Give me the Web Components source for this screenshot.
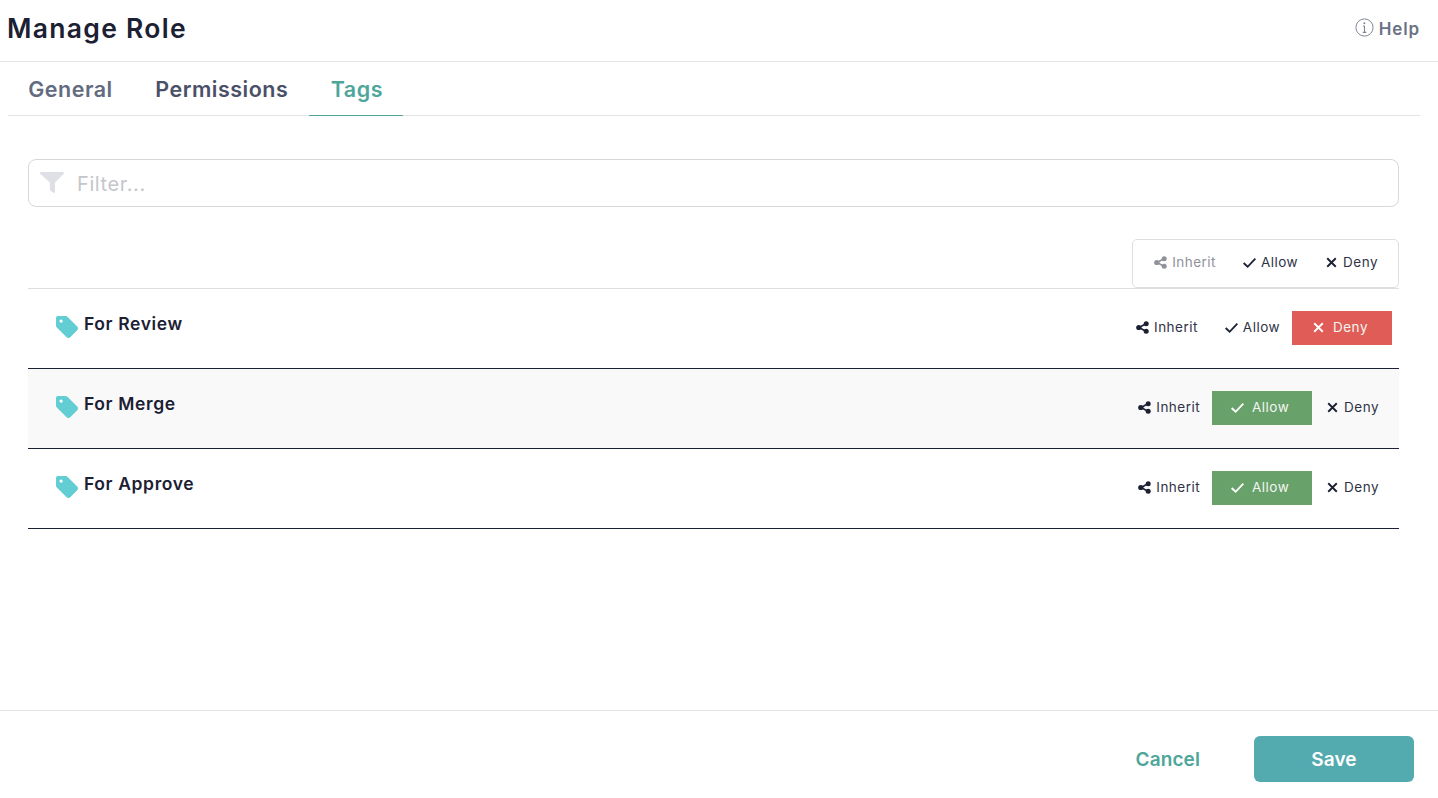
<!DOCTYPE html>
<html lang="en">
<head>
<meta charset="utf-8">
<title>Manage Role</title>
<style>
html, body { margin: 0; height: 100%; background: #fff; }
body { font-family: Inter, "Noto Sans", sans-serif; color: #1c2033; }
</style>
</head>
<body>
<role-page>
  <role-header slot="header" heading="Manage Role"></role-header>
  <role-tabs slot="tabs" items="General,Permissions,Tags" active="Tags"></role-tabs>
  <filter-box placeholder="Filter..."></filter-box>
  <perm-head></perm-head>
  <tag-row name="For Review" value="deny"></tag-row>
  <tag-row name="For Merge" value="allow" shaded></tag-row>
  <tag-row name="For Approve" value="allow"></tag-row>
  <role-footer slot="footer"></role-footer>
</role-page>

<script>
const ICONS = {
  inherit: '<svg viewBox="0 0 14 14"><path d="M10.6 3 3.4 7l7.2 4" fill="none" stroke="currentColor" stroke-width="1.7"/><circle cx="11" cy="2.900" r="2.700" fill="currentColor"/><circle cx="3" cy="7" r="2.800" fill="currentColor"/><circle cx="11" cy="11.100" r="2.700" fill="currentColor"/></svg>',
  allow: '<svg viewBox="0 0 14 14"><path d="M.7 7.500 5 11.600 13.300 2.900" fill="none" stroke="currentColor" stroke-width="2"/></svg>',
  deny: '<svg viewBox="0 0 14 14"><path d="M2.400 2.400 11.600 11.600M11.600 2.400 2.400 11.600" fill="none" stroke="currentColor" stroke-width="2"/></svg>',
};

class RolePage extends HTMLElement {
  constructor() {
    super();
    this.attachShadow({ mode: 'open' });
    this.shadowRoot.innerHTML = `
<style>
:host { display: flex; flex-direction: column; height: 798px; overflow: hidden; }
.tabs { padding: 0 18px 0 8px; }
.body { flex: 1; padding: 43px 39px 0 28px; }
</style>
<slot name="header"></slot>
<div class="tabs"><slot name="tabs"></slot></div>
<div class="body"><slot></slot></div>
<slot name="footer"></slot>`;
  }
}

class RoleHeader extends HTMLElement {
  constructor() {
    super();
    this.attachShadow({ mode: 'open' });
    this.shadowRoot.innerHTML = `
<style>
:host { display: flex; align-items: center; justify-content: space-between; box-sizing: border-box; height: 62px; padding: 0 18px 6px 7px; border-bottom: 1px solid #e3e4e8; }
h1 { margin: 0; font-size: 26.500px; font-weight: 600; color: #1c2033; letter-spacing: 1.300px; }
.help { display: flex; align-items: center; gap: 5px; font-size: 17px; font-weight: 600; color: #6b7285; padding-top: 3px; letter-spacing: .85px; }
svg { width: 19px; height: 19px; margin-top: -3px; }
</style>
<h1></h1>
<div class="help"><svg viewBox="0 0 19 19"><circle cx="9.500" cy="9.500" r="8.600" fill="none" stroke="#7d8496" stroke-width="1"/><path d="M9.500 8v6.400M7.900 8h1.600M7.700 14.400h3.600" fill="none" stroke="#7d8496" stroke-width="1.100"/><circle cx="9.400" cy="5.200" r="1" fill="#7d8496"/></svg>Help</div>`;
    this.shadowRoot.querySelector('h1').textContent = this.getAttribute('heading');
  }
}

class RoleTabs extends HTMLElement {
  constructor() {
    super();
    this.attachShadow({ mode: 'open' });
    this.shadowRoot.innerHTML = `
<style>
:host { display: block; border-bottom: 1px solid #e3e4e8; }
.list { display: flex; height: 53px; margin-left: -1px; }
.tab { box-sizing: border-box; display: flex; align-items: center; justify-content: center; padding: 0 21.250px; margin-bottom: -1px; font-size: 21.500px; font-weight: 600; letter-spacing: .5px; color: #4a5068; }
.tab:first-child { color: #636b80; }
.tab.active { color: #4ea69b; border-bottom: 1px solid #4ea69b; height: 54px; padding-top: 1px; padding-right: 20px; }
</style>
<div class="list"></div>`;
    const list = this.shadowRoot.querySelector('.list');
    const active = this.getAttribute('active');
    for (const name of this.getAttribute('items').split(',')) {
      const tab = document.createElement('div');
      tab.className = name === active ? 'tab active' : 'tab';
      tab.textContent = name;
      list.appendChild(tab);
    }
  }
}

class FilterBox extends HTMLElement {
  constructor() {
    super();
    this.attachShadow({ mode: 'open' });
    this.shadowRoot.innerHTML = `
<style>
:host { display: flex; align-items: center; box-sizing: border-box; height: 48px; padding: 0 11px; border: 1px solid #d6d8dc; border-radius: 8px; }
svg { width: 24px; height: 21px; flex: none; margin-right: 13px; margin-top: -2px; }
.ph { font-size: 20px; letter-spacing: .6px; color: #c4c6cb; padding-top: 1px; }
</style>
<svg viewBox="0 0 24 21"><path d="M1.200 0h21.600c1 0 1.500 1.200.8 1.900L15 10.600v9.200c0 .9-1 1.400-1.700.9l-3-2.200c-.3-.2-.4-.5-.4-.9v-7L.4 1.900C-.3 1.200.2 0 1.200 0z" fill="#dfe0e5"/></svg>
<span class="ph"></span>`;
    this.shadowRoot.querySelector('.ph').textContent = this.getAttribute('placeholder');
  }
}

class PermToggle extends HTMLElement {
  constructor() {
    super();
    this.attachShadow({ mode: 'open' });
    this.shadowRoot.innerHTML = `
<style>
:host { display: flex; align-items: center; font-size: 13.500px; letter-spacing: .48px; color: #2f3345; }
.opt { display: flex; align-items: center; gap: 5px; padding: 0 12px 0 15px; height: 34px; }
.on + .opt { padding: 0 13px 0 14px; }
.opt span { margin-top: -2px; }
.opt svg { width: 13px; height: 13px; margin-top: -1px; color: #1c2033; flex: none; }
.opt.on { box-sizing: border-box; width: 100px; justify-content: center; gap: 8px; padding: 0 4px 0 0; color: #f1f5f1; }
.opt.on svg { color: #fff; }
.on.allow { background: #69a16a; }
.on.deny { background: #e05d57; }
.muted { color: #8f929c; }
.muted svg { color: #8f929c; }
</style>`;
    const value = this.getAttribute('value');
    for (const [key, label] of [['inherit', 'Inherit'], ['allow', 'Allow'], ['deny', 'Deny']]) {
      const opt = document.createElement('div');
      opt.className = 'opt ' + key + (key === value ? ' on' : '');
      if (key === 'inherit' && this.hasAttribute('muted-inherit')) opt.classList.add('muted');
      opt.innerHTML = ICONS[key] + '<span>' + label + '</span>';
      this.shadowRoot.appendChild(opt);
    }
  }
}

class PermHead extends HTMLElement {
  constructor() {
    super();
    this.attachShadow({ mode: 'open' });
    this.shadowRoot.innerHTML = `
<style>
:host { display: flex; justify-content: flex-end; margin-top: 32px; height: 50px; box-sizing: border-box; border-bottom: 1px solid #dcdfe0; }
.box { box-sizing: border-box; width: 267px; height: 49px; display: flex; align-items: center; justify-content: flex-end; padding: 0 8px 2px 0; border: 1px solid #dcdfe0; border-radius: 5px; }
</style>
<div class="box"><perm-toggle muted-inherit></perm-toggle></div>`;
  }
}

class TagRow extends HTMLElement {
  constructor() {
    super();
    this.attachShadow({ mode: 'open' });
    // value goes in the markup, perm-toggle reads it when it is constructed
    this.shadowRoot.innerHTML = `
<style>
:host { display: flex; align-items: center; justify-content: space-between; box-sizing: border-box; height: 80px; padding: 0 7px 0 28px; border-bottom: 1px solid #1c2033; }
:host([shaded]) { background: #f9f9fa; }
.name { display: flex; align-items: center; gap: 6px; font-size: 17.500px; font-weight: 600; letter-spacing: .62px; color: #1c2033; margin-top: -3px; }
.name span { margin-top: -8px; }
svg { width: 22px; height: 22px; flex: none; }
perm-toggle { margin-top: -1px; }
</style>
<div class="name"><svg viewBox="0 0 22 22"><path d="M2 0h7.400c.8 0 1.500.3 2 .8l9.800 9.800c1 1 1 2.700 0 3.700l-6.900 6.900c-1 1-2.700 1-3.700 0L.8 11.400C.3 10.900 0 10.200 0 9.400V2C0 .9.900 0 2 0z" fill="#62cdd3"/><circle cx="5.100" cy="5.100" r="1.600" fill="#fff"/></svg><span></span></div>
<perm-toggle value="${this.getAttribute('value')}"></perm-toggle>`;
    this.shadowRoot.querySelector('.name span').textContent = this.getAttribute('name');
  }
}

class RoleFooter extends HTMLElement {
  constructor() {
    super();
    this.attachShadow({ mode: 'open' });
    this.shadowRoot.innerHTML = `
<style>
:host { display: flex; align-items: center; justify-content: flex-end; gap: 54px; box-sizing: border-box; height: 88px; padding: 9px 24px 0 0; border-top: 1px solid #e3e4e8; font-size: 19px; font-weight: 600; letter-spacing: .1px; }
.cancel { color: #4ea69b; }
.save { display: flex; align-items: center; justify-content: center; width: 160px; height: 46px; border-radius: 6px; background: #53abb0; color: #fff; }
</style>
<div class="cancel">Cancel</div>
<div class="save">Save</div>`;
  }
}

customElements.define('perm-toggle', PermToggle);
customElements.define('perm-head', PermHead);
customElements.define('tag-row', TagRow);
customElements.define('filter-box', FilterBox);
customElements.define('role-header', RoleHeader);
customElements.define('role-tabs', RoleTabs);
customElements.define('role-footer', RoleFooter);
customElements.define('role-page', RolePage);
</script>
</body>
</html>
